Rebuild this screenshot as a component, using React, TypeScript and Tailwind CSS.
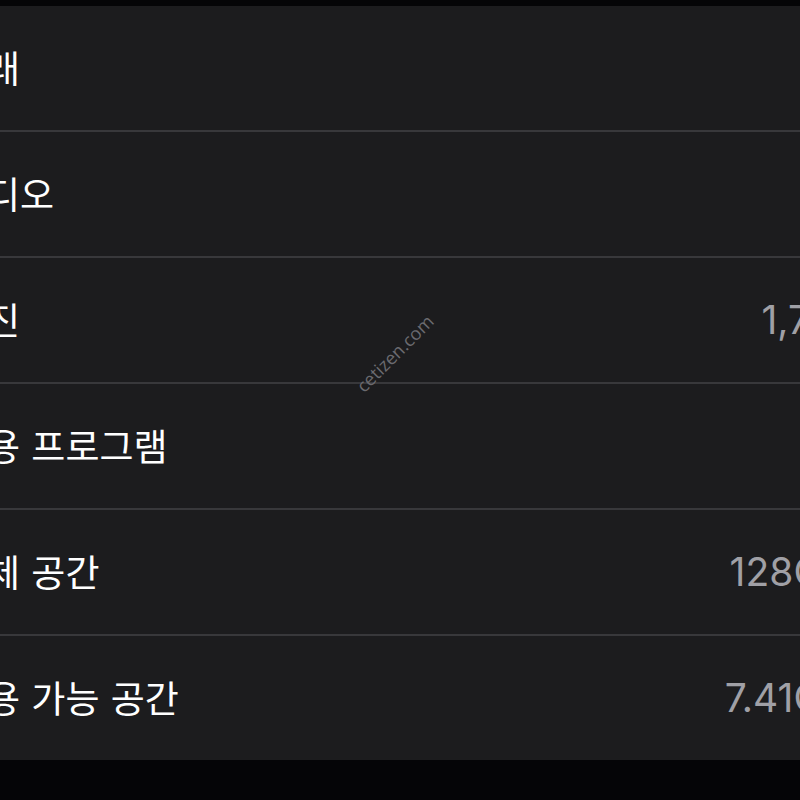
const rows = [
  { label: "노래", value: "0" },
  { label: "비디오", value: "37" },
  { label: "사진", value: "1,717" },
  { label: "응용 프로그램", value: "39" },
  { label: "전체 공간", value: "128GB" },
  { label: "사용 가능 공간", value: "7.41GB" },
];

export default function App() {
  return (
    <div className="w-[800px] h-[800px] overflow-hidden bg-[#050507] pt-[6px]">
      <div className="bg-[#1c1c1e] overflow-hidden">
        <div className="-ml-[48px] w-[896px]">
          {rows.map((r, i) => (
            <div key={r.label}>
              {i > 0 && <div className="h-[2px] bg-[#38383b]" />}
              <div className="h-[124px] flex items-center justify-between">
                <span
                  className="text-[37px] text-white [word-spacing:3px]"
                  style={{ fontFamily: '"Noto Sans CJK KR", sans-serif' }}
                >
                  {r.label}
                </span>
                <span
                  className="text-[39px] text-[#a0a0a6]"
                  style={{ fontFamily: 'Inter, "Noto Sans CJK KR", sans-serif' }}
                >
                  {r.value}
                </span>
              </div>
            </div>
          ))}
        </div>
      </div>
      <div className="relative">
        <span
          className="absolute left-[345px] -top-[420px] -rotate-45 text-[18px] text-[#6b6b70]"
          style={{ fontFamily: '"Open Sans", sans-serif' }}
        >
          cetizen.com
        </span>
      </div>
    </div>
  );
}
